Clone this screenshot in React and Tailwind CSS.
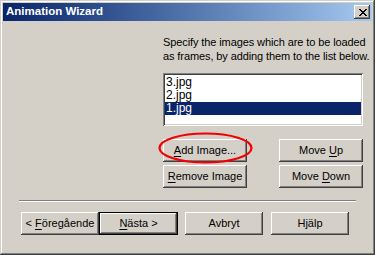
import React from 'react';

const raised =
	'bg-[#d4d0c8] shadow-[inset_-1px_-1px_#404040,inset_1px_1px_#fff,inset_-2px_-2px_#808080]';
const raisedDefault =
	'bg-[#d4d0c8] shadow-[inset_0_0_0_1px_#000,inset_-2px_-2px_#404040,inset_2px_2px_#fff,inset_-3px_-3px_#808080]';

const Button = ({ children, className = '', isDefault = false }) => (
	<div
		className={
			'flex items-center justify-center h-[23px] text-[11px] leading-none text-black whitespace-nowrap ' +
			(isDefault ? raisedDefault : raised) +
			' ' +
			className
		}
	>
		<span>{children}</span>
	</div>
);

const U = ({ children }) => <span className="underline underline-offset-[1.5px]">{children}</span>;

const CloseGlyph = () => (
	<svg width="8" height="7" viewBox="0 0 8 7" shapeRendering="crispEdges">
		<rect x="0" y="0" width="2" height="1" fill="#000" />
		<rect x="6" y="0" width="2" height="1" fill="#000" />
		<rect x="1" y="1" width="2" height="1" fill="#000" />
		<rect x="5" y="1" width="2" height="1" fill="#000" />
		<rect x="2" y="2" width="4" height="1" fill="#000" />
		<rect x="3" y="3" width="2" height="1" fill="#000" />
		<rect x="2" y="4" width="4" height="1" fill="#000" />
		<rect x="1" y="5" width="2" height="1" fill="#000" />
		<rect x="5" y="5" width="2" height="1" fill="#000" />
		<rect x="0" y="6" width="2" height="1" fill="#000" />
		<rect x="6" y="6" width="2" height="1" fill="#000" />
	</svg>
);

const files = ['3.jpg', '2.jpg', '1.jpg'];

export default function App() {
	return (
		<div className="w-[375px] h-[255px] p-[3px] flex flex-col overflow-hidden bg-[#d4d0c8] shadow-[inset_-1px_-1px_#404040,inset_1px_1px_#d4d0c8,inset_-2px_-2px_#808080,inset_2px_2px_#fff] font-['Liberation_Sans',Arial,sans-serif] text-[11px] text-black select-none">
			{/* title bar */}
			<div className="h-[18px] shrink-0 flex items-center justify-between pl-[3px] pr-[2px] bg-linear-to-r from-[#0a246a] to-[#a6caf0]">
				<span className="text-white font-bold text-[11.5px] leading-none">Animation Wizard</span>
				<div className={'w-[16px] h-[14px] flex items-center justify-center pl-[1px] ' + raised}>
					<CloseGlyph />
				</div>
			</div>

			{/* body */}
			<div className="flex flex-col">
				<div className="ml-[160px] mt-[14px] leading-[14px] whitespace-nowrap tracking-[-0.1px]">
					<p>Specify the images which are to be loaded</p>
					<p>as frames, by adding them to the list below.</p>
				</div>

				<div className="ml-[160px] mt-[10px] w-[200px] h-[53px] p-[2px] pt-[3px] bg-white shadow-[inset_1px_1px_#808080,inset_-1px_-1px_#fff,inset_2px_2px_#404040,inset_-2px_-2px_#d4d0c8]">
					{files.map((f, i) => (
						<div
							key={f}
							className={
								'h-[13px] pl-[1px] text-[12px] leading-[13px] ' +
								(i === 2 ? 'bg-[#0a246a] text-white' : 'text-black')
							}
						>
							{f}
						</div>
					))}
				</div>

				<div className="ml-[160px] mt-[13px] grid grid-cols-[84px_84px] gap-x-[32px] gap-y-[3px]">
					<div className="relative">
						<Button>
							<U>A</U>dd Image...
						</Button>
						<svg
							className="absolute left-[-5px] top-[-7px] pointer-events-none"
							width="95"
							height="32"
							viewBox="0 0 95 32"
						>
							<ellipse cx="47.5" cy="16" rx="46" ry="14.5" fill="none" stroke="#f00000" strokeWidth="2.2" />
						</svg>
					</div>
					<Button>
						Move <U>U</U>p
					</Button>
					<Button>
						<U>R</U>emove Image
					</Button>
					<Button>
						Move <U>D</U>own
					</Button>
				</div>

				<div className="ml-[16px] mt-[12px] w-[337px] border-t border-b border-t-[#808080] border-b-white" />

				<div className="ml-[18px] mt-[10px] flex">
					<Button className="w-[78px]">
						&lt; <U>F</U>öregående
					</Button>
					<Button isDefault className="w-[79px]">
						<U>N</U>ästa &gt;
					</Button>
					<Button className="w-[78px] ml-[7px]">Avbryt</Button>
					<Button className="w-[78px] ml-[8px]">Hjälp</Button>
				</div>
			</div>
		</div>
	);
}
